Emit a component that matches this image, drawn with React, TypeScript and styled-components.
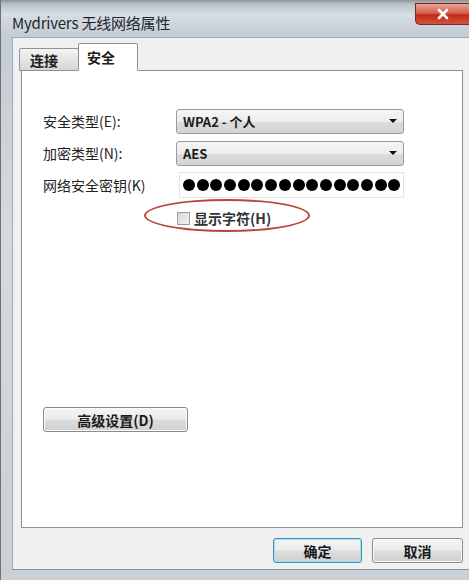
import styled, { createGlobalStyle } from "styled-components";

const GlobalStyle = createGlobalStyle`
    html, body {
        margin: 0;
        padding: 0;
        width: 469px;
        height: 580px;
        overflow: hidden;
    }
    body {
        font-family: "Noto Sans CJK SC", "Noto Sans", sans-serif;
    }
`;

const Frame = styled.div`
    width: 469px;
    height: 580px;
    display: flex;
    flex-direction: column;
    background: linear-gradient(180deg, #9aa0a6 0%, #c4ccd3 6%, #d3dae0 40%, #c9d0d6 100%);
    border-left: 1px solid #6e7277;
    box-sizing: border-box;
`;
const TitleBar = styled.div`
    height: 37px;
    display: flex;
    align-items: flex-start;
    justify-content: space-between;
    padding-left: 11px;
    background: linear-gradient(180deg, #8e9399 0px, #b8c0c7 4px, #d6dde3 14px, #c3cad1 37px);
`;
const Title = styled.span`
    margin-top: 12px;
    font-size: 15px;
    color: #1f2630;
    letter-spacing: -0.2px;
`;
const CloseButton = styled.div`
    width: 54px;
    height: 22px;
    margin-top: 3px;
    border: 1px solid #7a2a22;
    border-right: none;
    border-radius: 0 0 0 5px;
    background: linear-gradient(180deg, #e9a596 0%, #d9604b 45%, #c22a17 55%, #d1533b 100%);
    display: flex;
    align-items: center;
    justify-content: center;
    box-sizing: border-box;
    svg {
        width: 12px;
        height: 12px;
    }
`;
const Client = styled.div`
    flex: 1;
    margin: 0 0 10px 11px;
    background: #f0f0f0;
    border-left: 1px solid #a4a9ae;
    border-top: 1px solid #a4a9ae;
    border-bottom: 1px solid #8c9196;
    display: flex;
    flex-direction: column;
    padding: 5px 6px 0 6px;
`;
const TabRow = styled.div`
    display: flex;
    align-items: flex-end;
    height: 28px;
    margin-bottom: -1px;
    position: relative;
    z-index: 1;
`;
const Tab = styled.div<{ $active?: boolean }>`
    height: ${p => (p.$active ? "28px" : "23px")};
    box-sizing: border-box;
    padding: 0 ${p => (p.$active ? "22px" : "20px")} 0 ${p => (p.$active ? "8px" : "10px")};
    display: flex;
    align-items: center;
    font-size: 14px;
    font-weight: 600;
    color: #202020;
    border: 1px solid #8d9299;
    border-bottom: ${p => (p.$active ? "1px solid #ffffff" : "1px solid #8d9299")};
    border-radius: 2px 2px 0 0;
    background: ${p => (p.$active ? "#ffffff" : "linear-gradient(180deg, #f4f4f4 0%, #e4e4e4 50%, #d6d6d6 100%)")};
    margin-left: ${p => (p.$active ? "-1px" : "0")};
`;
const Panel = styled.div`
    height: 458px;
    box-sizing: border-box;
    margin-left: 2px;
    background: #ffffff;
    border: 1px solid #8d9299;
    display: flex;
    flex-direction: column;
    padding: 37px 0 0 21px;
`;
const FieldRow = styled.div`
    display: flex;
    align-items: center;
    height: 26px;
    margin-bottom: 6px;
`;
const Label = styled.span`
    width: 133px;
    font-size: 14px;
    color: #222222;
    white-space: nowrap;
`;
const Select = styled.div`
    width: 228px;
    height: 25px;
    box-sizing: border-box;
    border: 1px solid #9a9a9a;
    border-radius: 3px;
    background: linear-gradient(180deg, #f6f6f6 0%, #ececec 50%, #dcdcdc 51%, #d4d4d4 100%);
    display: flex;
    align-items: center;
    justify-content: space-between;
    padding: 0 6px 0 6px;
    font-size: 13px;
    font-weight: 700;
    color: #1c1c1c;
`;
const Arrow = styled.span`
    width: 0;
    height: 0;
    border-left: 4px solid transparent;
    border-right: 4px solid transparent;
    border-top: 4px solid #111111;
`;
const KeyField = styled.div`
    width: 225px;
    height: 26px;
    margin-left: 3px;
    box-sizing: border-box;
    border: 1px solid #e4e4e4;
    display: flex;
    align-items: center;
    gap: 1.7px;
    padding-left: 3px;
`;
const Dot = styled.span`
    width: 12px;
    height: 12px;
    border-radius: 50%;
    background: #000000;
    flex-shrink: 0;
`;
const CheckRow = styled.label`
    position: relative;
    display: flex;
    align-items: center;
    gap: 4px;
    margin: 6px 0 0 134px;
    height: 16px;
    font-size: 14px;
    font-weight: 600;
    color: #333333;
`;
const CheckBox = styled.span`
    width: 13px;
    height: 13px;
    box-sizing: border-box;
    border: 1px solid #9c9c9c;
    background: linear-gradient(135deg, #d8d8d8 0%, #f2f2f2 100%);
`;
const Annotation = styled.span`
    position: absolute;
    left: -33px;
    top: -11px;
    width: 162px;
    height: 29px;
    border: 2px solid #b8473a;
    border-radius: 50%;
    pointer-events: none;
`;
const Button = styled.div<{ $width: number; $focused?: boolean }>`
    width: ${p => p.$width}px;
    height: 25px;
    box-sizing: border-box;
    border: 1px solid ${p => (p.$focused ? "#3c8fb5" : "#8a8a8a")};
    border-radius: 3px;
    background: linear-gradient(180deg, #f4f4f4 0%, #ebebeb 48%, #dddddd 52%, #cfcfcf 100%);
    box-shadow: ${p => (p.$focused ? "inset 0 0 0 1px #9fe2f7" : "inset 0 0 0 1px #fbfbfb")};
    display: flex;
    align-items: center;
    justify-content: center;
    font-size: 14px;
    font-weight: 600;
    color: #1a1a1a;
`;
const AdvancedButton = styled(Button)`
    margin-top: 181px;
`;
const Footer = styled.div`
    flex: 1;
    display: flex;
    align-items: flex-start;
    justify-content: flex-end;
    gap: 10px;
    padding-top: 10px;
`;

export default function App() {
    return (
        <>
            <GlobalStyle />
            <Frame>
                <TitleBar>
                    <Title>Mydrivers 无线网络属性</Title>
                    <CloseButton>
                        <svg viewBox="0 0 12 12">
                            <path d="M2 2 L10 10 M10 2 L2 10" stroke="#ffffff" strokeWidth="2.6" strokeLinecap="round" />
                        </svg>
                    </CloseButton>
                </TitleBar>
                <Client>
                    <TabRow>
                        <Tab>连接</Tab>
                        <Tab $active>安全</Tab>
                    </TabRow>
                    <Panel>
                        <FieldRow>
                            <Label>安全类型(E):</Label>
                            <Select>
                                <span>WPA2 - 个人</span>
                                <Arrow />
                            </Select>
                        </FieldRow>
                        <FieldRow>
                            <Label>加密类型(N):</Label>
                            <Select>
                                <span>AES</span>
                                <Arrow />
                            </Select>
                        </FieldRow>
                        <FieldRow>
                            <Label>网络安全密钥(K)</Label>
                            <KeyField>
                                {Array.from({ length: 16 }).map((_, i) => (
                                    <Dot key={i} />
                                ))}
                            </KeyField>
                        </FieldRow>
                        <CheckRow>
                            <CheckBox />
                            显示字符(H)
                            <Annotation />
                        </CheckRow>
                        <AdvancedButton $width={145}>高级设置(D)</AdvancedButton>
                    </Panel>
                    <Footer>
                        <Button $width={89} $focused>确定</Button>
                        <Button $width={91}>取消</Button>
                    </Footer>
                </Client>
            </Frame>
        </>
    );
}
